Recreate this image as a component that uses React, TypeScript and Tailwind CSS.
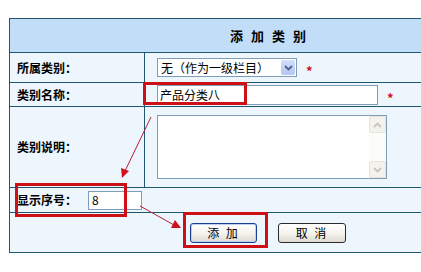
import React from 'react'

const font = { fontFamily: '"Noto Sans CJK SC", "Liberation Sans", sans-serif' }

const Label = ({ children }: { children: React.ReactNode }) => (
  <span className="pl-[7px] text-[12px] font-bold text-black">{children}</span>
)

const Star = () => (
  <span className="ml-[9px] translate-y-[3px] text-[13px] font-bold text-[#d0102a]">*</span>
)

const XpButton = ({ label, active }: { label: string; active?: boolean }) => (
  <button
    className={
      'flex h-[20px] items-center justify-center rounded-[3px] border bg-gradient-to-b from-white via-[#f5f4ee] to-[#dcdad0] text-[12px] tracking-[2px] text-black ' +
      (active
        ? 'w-[67px] border-[#1b3f8f] shadow-[inset_0_0_0_1px_#bcd0f4]'
        : 'w-[68px] border-[#2b2b2b]')
    }
  >
    {label}
  </button>
)

const Chevron = ({ up }: { up?: boolean }) => (
  <svg width="9" height="6" viewBox="0 0 9 6">
    <path
      d={up ? 'M1 5 L4.5 1.5 L8 5' : 'M1 1 L4.5 4.5 L8 1'}
      fill="none"
      stroke="currentColor"
      strokeWidth="1.8"
    />
  </svg>
)

export default function App() {
  return (
    <div className="relative h-[272px] w-[421px] overflow-hidden bg-white" style={font}>
      <div className="ml-[9px] mt-[18px] w-[518px] border border-[#1f5670] bg-[#eef6fd]">
        <header className="flex h-[34px] items-center justify-center gap-[8px] border-b border-[#1f5670] bg-[#c2ddf7] text-[13px] font-bold text-black">
          <span>添</span>
          <span>加</span>
          <span>类</span>
          <span>别</span>
        </header>

        <div className="flex h-[30px] border-b border-[#1f5670]">
          <div className="flex w-[135px] items-center border-r border-[#1f5670]">
            <Label>所属类别：</Label>
          </div>
          <div className="flex items-center pl-[12px]">
            <div className="flex h-[19px] w-[140px] items-center border border-[#7f9db9] bg-white">
              <span className="flex-1 pl-[3px] text-[12px] text-black">无（作为一级栏目）</span>
              <div className="mr-px flex h-[15px] w-[14px] items-center justify-center rounded-[2px] bg-gradient-to-b from-[#d2dffb] to-[#b3c6f3] text-[#4d6185]">
                <Chevron />
              </div>
            </div>
            <Star />
          </div>
        </div>

        <div className="flex h-[24px] border-b border-[#1f5670]">
          <div className="flex w-[135px] items-center border-r border-[#1f5670]">
            <Label>类别名称：</Label>
          </div>
          <div className="flex items-center pl-[12px]">
            <div className="flex h-[20px] w-[221px] items-center border border-[#7f9db9] bg-white pl-[2px] text-[12px] text-black">
              产品分类八
            </div>
            <Star />
          </div>
        </div>

        <div className="flex h-[81px] border-b border-[#1f5670]">
          <div className="flex w-[135px] items-center border-r border-[#1f5670]">
            <Label>类别说明：</Label>
          </div>
          <div className="flex items-center pl-[12px]">
            <div className="flex h-[64px] w-[230px] border border-[#7f9db9] bg-white">
              <div className="flex-1" />
              <div className="flex w-[17px] flex-col justify-between bg-[#fcfcf8]">
                <div className="flex h-[17px] items-center justify-center rounded-[2px] border border-[#e6e4dc] bg-[#f3f2ec] text-[#c6c4bc]">
                  <Chevron up />
                </div>
                <div className="flex h-[17px] items-center justify-center rounded-[2px] border border-[#e6e4dc] bg-[#f3f2ec] text-[#c6c4bc]">
                  <Chevron />
                </div>
              </div>
            </div>
          </div>
        </div>

        <div className="flex h-[25px] items-center border-b border-[#1f5670]">
          <Label>显示序号：</Label>
          <div className="ml-[11px] flex h-[19px] w-[54px] items-center border border-[#7f9db9] bg-white pl-[3px] text-[12px] text-black">
            8
          </div>
        </div>

        <div className="flex h-[39px] items-center justify-center gap-[21px]">
          <XpButton label="添 加" active />
          <XpButton label="取 消" />
        </div>
      </div>

      {/* annotations */}
      <div className="absolute left-[143px] top-[82px] h-[23px] w-[104px] border-[3px] border-[#cc1016]" />
      <div className="absolute left-[15px] top-[183px] h-[34px] w-[112px] border-[3px] border-[#cc1016]" />
      <div className="absolute left-[183px] top-[212px] h-[36px] w-[85px] border-[3px] border-[#cc1016]" />
      <svg className="pointer-events-none absolute left-0 top-0" width="421" height="272">
        <line x1="151" y1="117" x2="125" y2="171" stroke="#b0203a" strokeWidth="1" />
        <polygon points="122,178 121,168 129,171" fill="#d0101c" />
        <line x1="140" y1="206" x2="174" y2="225" stroke="#b0203a" strokeWidth="1" />
        <polygon points="181,228 171,228 175,220" fill="#d0101c" />
      </svg>
    </div>
  )
}
